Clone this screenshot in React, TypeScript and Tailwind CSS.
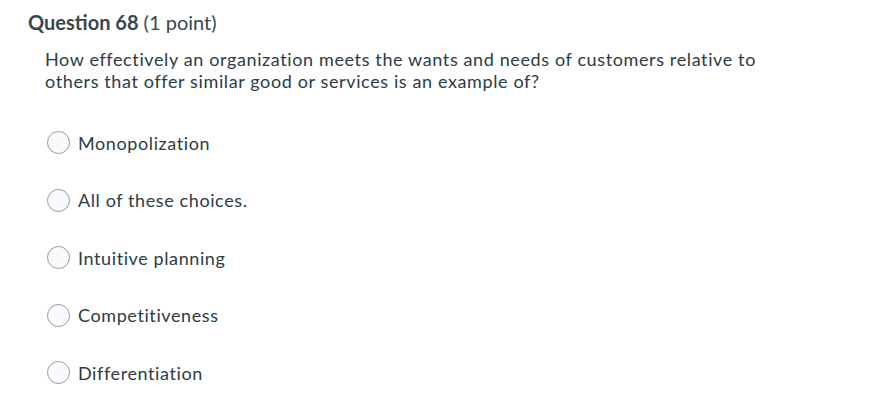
const options = [
  'Monopolization',
  'All of these choices.',
  'Intuitive planning',
  'Competitiveness',
  'Differentiation',
];

const Radio = () => (
  <span className="block w-[23px] h-[23px] rounded-full border border-[#9a9a9a] bg-[#f9fafd] shrink-0" />
);

export default function App() {
  return (
    <div className="w-[876px] h-[413px] bg-white text-[#2d3b45] font-['Lato',sans-serif] overflow-hidden">
      <div className="pl-[28px] pt-[8px]">
        <h2 className="text-[20px] leading-[28px] text-[#3a464e]">
          <span className="font-bold">Question 68</span>{' '}
          <span className="font-normal">(1 point)</span>
        </h2>
      </div>
      <div className="pl-[45px] pt-[12px]">
        <p className="text-[18px] leading-[22px] tracking-[0.62px] w-[760px]">
          How effectively an organization meets the wants and needs of customers relative to
          others that offer similar good or services is an example of?
        </p>
        <div className="mt-[39px] flex flex-col gap-[34.5px] pl-[2px]">
          {options.map((o) => (
            <label key={o} className="flex items-center gap-[8px] h-[23px]">
              <Radio />
              <span className="text-[18px] leading-[22px] tracking-[0.6px]">{o}</span>
            </label>
          ))}
        </div>
      </div>
    </div>
  );
}
